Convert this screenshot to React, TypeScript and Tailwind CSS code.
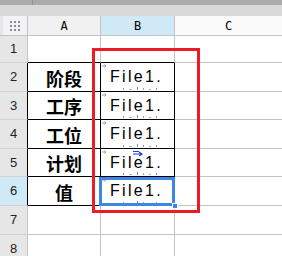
const ROWS = [
  { n: 1, h: "h-[27px]", label: "" },
  { n: 2, h: "h-[29px]", label: "阶段" },
  { n: 3, h: "h-[28px]", label: "工序" },
  { n: 4, h: "h-[29px]", label: "工位" },
  { n: 5, h: "h-[28px]", label: "计划" },
  { n: 6, h: "h-[29px]", label: "值" },
  { n: 7, h: "h-[29px]", label: "" },
  { n: 8, h: "h-[29px]", label: "" },
];

function CornerDots() {
  return (
    <div className="grid grid-cols-3 gap-[2px]">
      {Array.from({ length: 9 }).map((_, i) => (
        <div key={i} className="w-[2px] h-[2px] bg-[#8c8c8c]" />
      ))}
    </div>
  );
}

function CellMark() {
  return (
    <svg width="5" height="4" viewBox="0 0 5 4" className="absolute left-[1px] top-[1px]">
      <path d="M0 2H4M2.5 0.5L4 2L2.5 3.5" stroke="#8a8a8a" strokeWidth="0.8" fill="none" />
    </svg>
  );
}

// tops of the clipped second line peeking at the cell bottom
function ClippedLine() {
  return (
    <div className="absolute left-[22px] bottom-[1px] flex items-end gap-[5px]">
      <div className="w-[1px] h-[2px] bg-[#9a9a9a]" />
      <div className="w-[3px] h-[1px] bg-[#b5b5b5]" />
      <div className="w-[1px] h-[3px] bg-[#8a8a8a]" />
      <div className="w-[1px] h-[2px] bg-[#a0a0a0]" />
      <div className="w-[2px] h-[1px] bg-[#b0b0b0]" />
      <div className="w-[1px] h-[2px] bg-[#9a9a9a]" />
    </div>
  );
}

function FileCell() {
  return (
    <div className="relative h-full overflow-hidden pl-[9px] pt-[5px] font-['Liberation_Sans',sans-serif] text-[16px] leading-[18px] tracking-[2.3px] text-black">
      <CellMark />
      <div>File1.</div>
      <ClippedLine />
    </div>
  );
}

export default function App() {
  return (
    <div className="relative w-[282px] h-[256px] overflow-hidden bg-white select-none">
      {/* top toolbar strips */}
      <div className="flex h-[5px] bg-[#aaaaaa]">
        <div className="w-[33px] border-r border-[#8f8f8f]" />
      </div>
      <div className="h-[11px] bg-[#d9d9d9]" />

      {/* column headers */}
      <div className="flex h-[20px] font-['DejaVu_Sans_Mono',monospace] text-[12px] text-black">
        <div className="w-[28px] flex bg-[#e6e6e6] border-r border-b border-[#c4c4c4]">
          <div className="ml-[3px] flex-1 bg-[#f3f3f5] flex items-center justify-center">
            <CornerDots />
          </div>
        </div>
        <div className="w-[73px] bg-[#f1f1f1] border-r border-b border-[#c4c4c4] flex items-center justify-center">
          A
        </div>
        <div className="w-[74px] bg-[#cfe9f6] border-r border-b border-[#c4c4c4] flex items-center justify-center">
          B
        </div>
        <div className="flex-1 bg-[#fafafa] border-b border-[#c4c4c4] flex items-center justify-center">
          C
        </div>
      </div>

      {/* rows */}
      {ROWS.map((r) => {
        const boxed = r.n >= 2 && r.n <= 6;
        const topOfBox = r.n >= 1 && r.n <= 6;
        return (
          <div key={r.n} className={`flex ${r.h}`}>
            <div
              className={`w-[28px] flex items-center justify-center border-b border-r border-b-[#d2d2d2] font-['Liberation_Sans',sans-serif] text-[13px] text-[#222] ${
                r.n === 6 ? "bg-[#cfe9f6]" : "bg-[#e6e6e6]"
              } ${boxed ? "border-r-black" : "border-r-[#c4c4c4]"}`}
            >
              {r.n}
            </div>
            <div
              className={`w-[73px] flex items-center justify-center border-r border-b pt-[2px] font-['Noto_Sans_CJK_SC',sans-serif] text-[18px] font-bold text-black ${
                boxed ? "border-r-black" : "border-r-[#c4c4c4]"
              } ${topOfBox ? "border-b-black" : "border-b-[#c4c4c4]"}`}
            >
              {r.label}
            </div>
            <div
              className={`w-[74px] border-r border-b ${boxed ? "border-r-black" : "border-r-[#c4c4c4]"} ${
                topOfBox ? "border-b-black" : "border-b-[#c4c4c4]"
              }`}
            >
              {boxed && <FileCell />}
            </div>
            <div className="flex-1 border-b border-[#c4c4c4]" />
          </div>
        );
      })}

      {/* blue arrow marker in B5 */}
      <svg width="10" height="5" viewBox="0 0 10 5" className="absolute left-[133px] top-[151px]">
        <path d="M0 0.5H6M0 3H8M6 1L9 3L6 5" stroke="#1a3be0" strokeWidth="1.2" fill="none" />
      </svg>

      {/* red highlight rectangle */}
      <div className="absolute left-[92px] top-[48px] w-[108px] h-[165px] border-[3px] border-[#ec1c24]" />

      {/* active cell selection */}
      <div className="absolute left-[99px] top-[177px] w-[76px] h-[29px] border-[3px] border-[#3b86e6]" />
      <div className="absolute left-[172px] top-[203px] w-[6px] h-[6px] bg-[#3b86e6] border border-white" />
    </div>
  );
}
